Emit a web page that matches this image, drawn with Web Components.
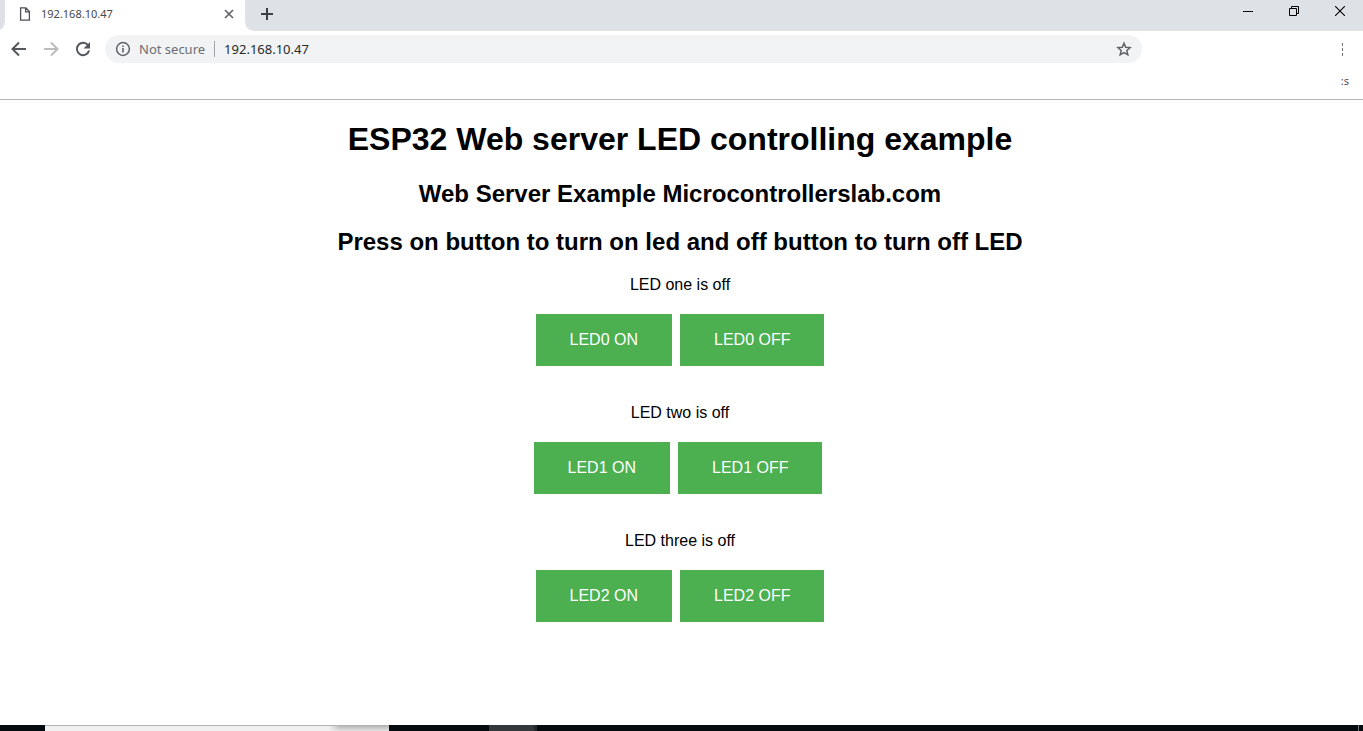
<!DOCTYPE html>
<html lang="en">
<head>
<meta charset="utf-8">
<meta name="viewport" content="width=device-width, initial-scale=1">
<title>192.168.10.47</title>
<style>
body { margin: 0; background: #fff; font-family: "Liberation Sans", Arial, sans-serif; }
</style>
</head>
<body>
<desktop-screen>
  <browser-tabs slot="chrome">192.168.10.47</browser-tabs>
  <browser-toolbar slot="chrome" address="192.168.10.47"></browser-toolbar>
  <bookmark-bar slot="chrome">:s</bookmark-bar>
  <led-page>
    <led-control name="LED0">LED one is off</led-control>
    <led-control name="LED1" trailing>LED two is off</led-control>
    <led-control name="LED2">LED three is off</led-control>
  </led-page>
  <task-bar slot="taskbar"></task-bar>
</desktop-screen>
<script>
const define = (name, html, setup) => {
  const template = document.createElement('template');
  template.innerHTML = `<style>:host,*{box-sizing:border-box}
    button{appearance:none;border:0;background:none;padding:0;margin:0;font:inherit;color:inherit;cursor:pointer}
    svg{display:block}</style>` + html;
  customElements.define(name, class extends HTMLElement {
    constructor() {
      super();
      this.attachShadow({ mode: 'open' }).append(template.content.cloneNode(true));
    }
    connectedCallback() { if (setup) setup(this, this.shadowRoot); }
  });
};

define('desktop-screen', `
<style>
:host { display: flex; flex-direction: column; min-height: 100vh; }
header { border-bottom: 1px solid #b3b4b6; }
main { flex: 1; }
</style>
<header><slot name="chrome"></slot></header>
<main><slot></slot></main>
<slot name="taskbar"></slot>`);

define('browser-tabs', `
<style>
:host { display: flex; height: 31px; background: #dee1e6; padding-left: 5px; font: 11px/16px "Noto Sans", "Segoe UI", sans-serif; color: #45494d; }
.tab { position: relative; display: flex; align-items: center; width: 240px; padding: 0 10px 3px 14px; background: #fff; }
.tab::before, .tab::after { content: ""; position: absolute; bottom: 0; width: 8px; height: 8px; }
.tab::before { right: 100%; background: radial-gradient(circle at 0 0, #dee1e6 7px, #fff 8px); }
.tab::after { left: 100%; background: radial-gradient(circle at 100% 0, #dee1e6 7px, #fff 8px); }
.title { flex: 1; padding-left: 10px; }
.new { width: 44px; height: 28px; display: grid; place-items: center; }
.window { margin-left: auto; display: flex; }
.window button { width: 46px; height: 22px; display: grid; place-items: center; }
</style>
<div class="tab">
  <svg width="12" height="14" viewBox="0 0 12 14" fill="none" stroke="#4d5156" stroke-width="1.3"><path d="M1.6.8h5.2l3.6 3.7v8.7H1.6zM6.6.8v4h3.8"/></svg>
  <span class="title"><slot></slot></span>
  <button aria-label="Close tab"><svg width="12" height="12" viewBox="0 0 12 12" stroke="#5f6368" stroke-width="1.7"><path d="M2 2l8 8M10 2l-8 8"/></svg></button>
</div>
<button class="new" aria-label="New tab"><svg width="14" height="14" viewBox="0 0 14 14" stroke="#3c4043" stroke-width="2"><path d="M7 1v12M1 7h12"/></svg></button>
<div class="window">
  <button aria-label="Minimize"><svg width="10" height="10" viewBox="0 0 10 10"><path d="M0 5h10v1H0z"/></svg></button>
  <button aria-label="Restore"><svg width="10" height="10" viewBox="0 0 10 10" fill="none" stroke="#000"><path d="M.5 2.5h7v7h-7zM2.5 2.5v-2h7v7h-2"/></svg></button>
  <button aria-label="Close"><svg width="10" height="10" viewBox="0 0 10 10" stroke="#000" stroke-width="1.1"><path d="M0 0l10 10M10 0L0 10"/></svg></button>
</div>`);

define('browser-toolbar', `
<style>
:host { display: flex; align-items: center; height: 36px; padding: 0 13px 0 3px; font: 13px/18px "Noto Sans", "Segoe UI", sans-serif; }
.nav { width: 32px; height: 28px; display: grid; place-items: center; }
form { flex: 1; display: flex; align-items: center; height: 28px; margin: 0 194px 0 6px; padding: 0 10px; border-radius: 14px; background: #f1f3f4; }
.security { margin-left: 8px; color: #6b6f73; }
.line { width: 1px; height: 16px; margin: 0 9px; background: #a0a3a7; }
input { flex: 1; min-width: 0; border: 0; padding: 0; background: none; font: inherit; color: #27292c; outline: 0; }
.menu { width: 14px; display: grid; place-items: center; }
</style>
<button class="nav" aria-label="Back"><svg width="16" height="16" viewBox="0 0 16 16" fill="none" stroke="#54585c" stroke-width="2"><path d="M15 8H2.500M8 1.500L1.500 8 8 14.500"/></svg></button>
<button class="nav" aria-label="Forward"><svg width="16" height="16" viewBox="0 0 16 16" fill="none" stroke="#babcbe" stroke-width="2"><path d="M1 8h12.500M8 1.500L14.500 8 8 14.500"/></svg></button>
<button class="nav" aria-label="Reload"><svg width="16" height="16" viewBox="0 0 16 16"><path d="M13.300 4.500A6.200 6.200 0 1 0 14.100 9.600" fill="none" stroke="#54585c" stroke-width="2"/><path d="M15 1v6.500H8.500z" fill="#54585c"/></svg></button>
<form>
  <svg width="16" height="16" viewBox="0 0 16 16"><circle cx="8" cy="8" r="6.400" fill="none" stroke="#5f6368" stroke-width="1.500"/><path d="M7.200 7h1.600v4.500H7.200zM7.200 4.500h1.600V6H7.200z" fill="#5f6368"/></svg>
  <span class="security">Not secure</span><span class="line"></span>
  <input aria-label="Address" type="text">
  <button type="button" aria-label="Bookmark this page"><svg width="16" height="16" viewBox="0 0 16 16" fill="none" stroke="#5f6368" stroke-width="1.500"><path d="M8 2.200l1.700 4 4.400.4-3.300 2.900 1 4.200L8 11.500l-3.800 2.200 1-4.200L1.900 6.600l4.400-.4z"/></svg></button>
</form>
<button class="menu" aria-label="Menu"><svg width="2" height="14" viewBox="0 0 2 14" fill="#6f7377"><path d="M0 1h1v3H0zM0 6h1v3H0zM0 11h1v3H0z"/></svg></button>`,
(host, root) => { root.querySelector('input').value = host.getAttribute('address'); });

define('bookmark-bar', `
<style>
:host { display: flex; align-items: center; justify-content: flex-end; height: 32px; padding: 0 14px 4px 0; font: 11px/16px "Noto Sans", "Segoe UI", sans-serif; color: #55505a; }
</style>
<slot></slot>`);

define('led-page', `
<style>
:host { display: block; padding: 21px 3px 0 0; text-align: center; color: #000; font-size: 16px; line-height: 18px; }
h1 { margin: 0 0 23px; font-size: 32px; line-height: 36px; }
h2 { margin: 0 0 20px; font-size: 24px; line-height: 28px; }
</style>
<h1>ESP32 Web server LED controlling example</h1>
<h2>Web Server Example Microcontrollerslab.com</h2>
<h2>Press on button to turn on led and off button to turn off LED</h2>
<slot></slot>`);

define('led-control', `
<style>
:host { display: block; margin-bottom: 38px; }
p { margin: 0 0 20px; }
div { display: flex; justify-content: center; gap: 8px; }
:host([trailing]) div { padding-right: 4px; }
div button { padding: 17px 34px; background: #4caf50; color: #fff; font-size: 16px; line-height: 18px; }
</style>
<p><slot></slot></p>
<div><button class="on"></button><button class="off"></button></div>`,
(host, root) => {
  const name = host.getAttribute('name');
  root.querySelector('.on').textContent = name + ' ON';
  root.querySelector('.off').textContent = name + ' OFF';
});

define('task-bar', `
<style>
:host { display: flex; height: 6px; background: #060b10; }
.search { width: 344px; margin-left: 45px; border-top: 1px solid #b4b4b4; background: #f1f1f1; display: flex; justify-content: flex-end; }
.shade { width: 61px; background: linear-gradient(90deg, #f1f1f1, transparent 12px), linear-gradient(#b9b9b9, #e2e2e2); }
.app { width: 48px; margin-left: 100px; background: #35383a; border-right: 3px solid #24282a; }
.peek { width: 1px; margin: 0 4px 0 auto; background: #6c7074; }
</style>
<span class="search"><span class="shade"></span></span><span class="app"></span><span class="peek"></span>`);
</script>
</body>
</html>
